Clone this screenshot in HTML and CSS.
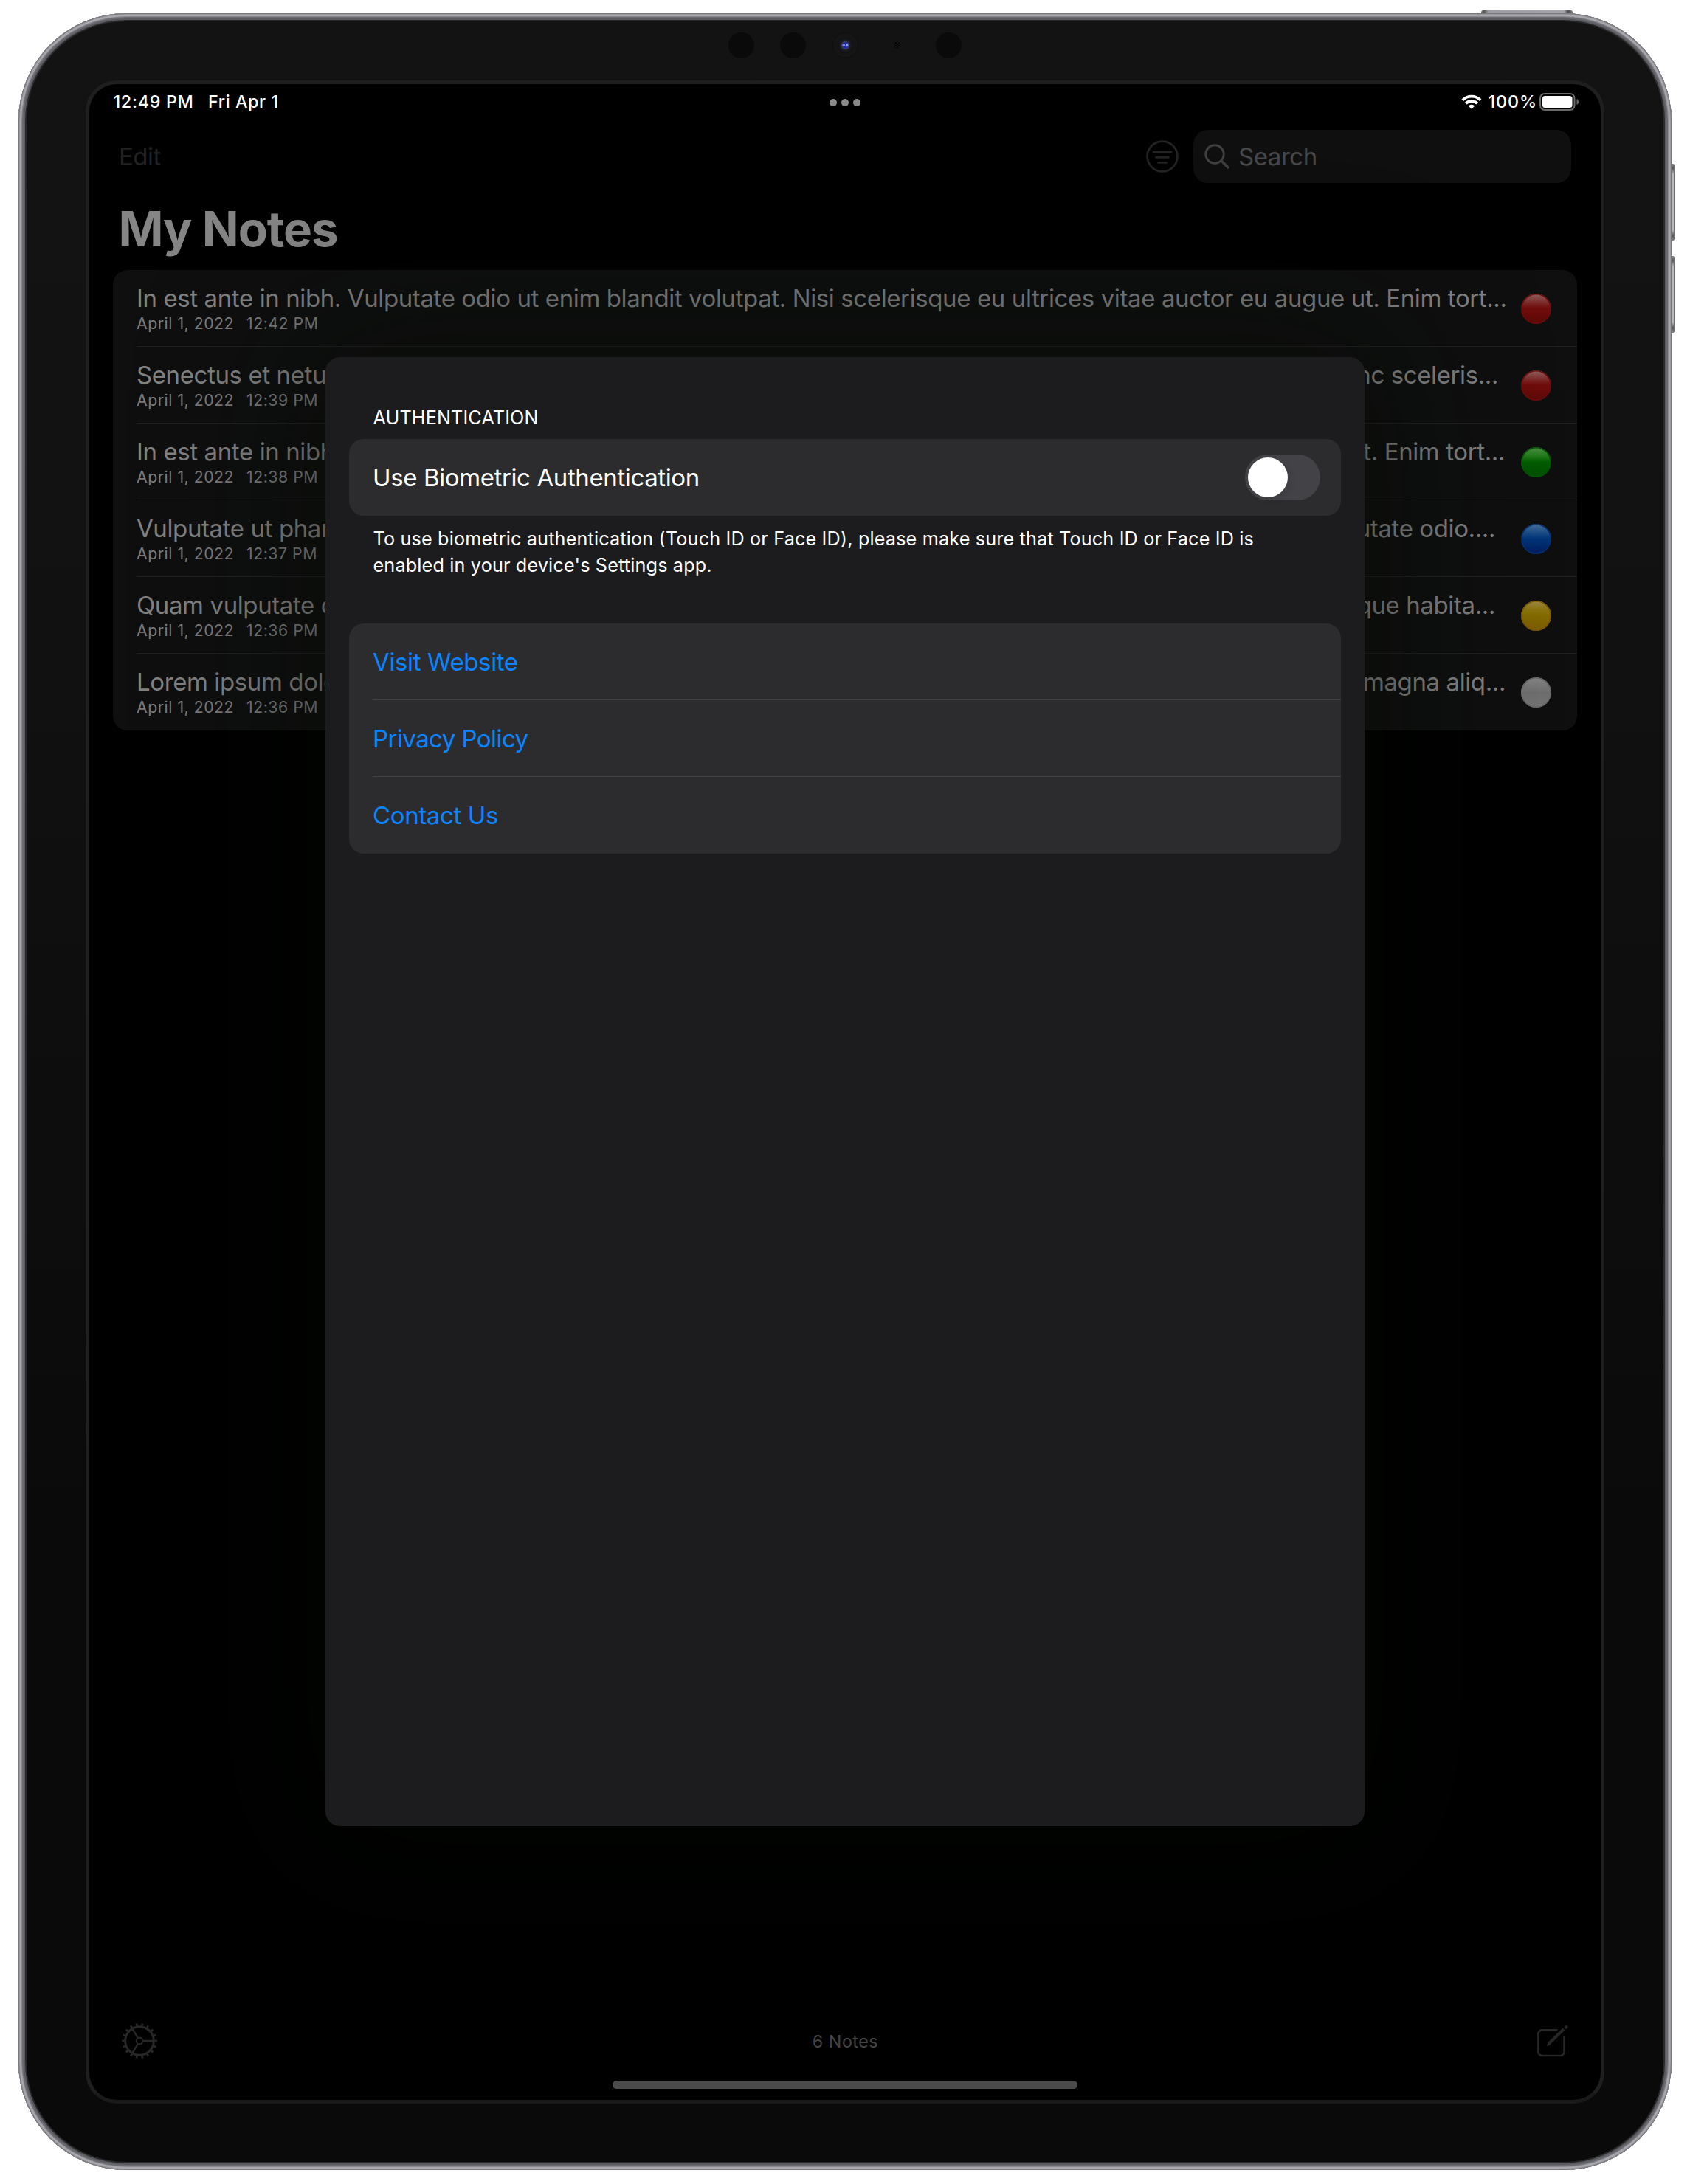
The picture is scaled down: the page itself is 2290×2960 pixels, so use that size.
FILE: index.html
```
<!DOCTYPE html>
<html lang="en">
<head>
<meta charset="utf-8">
<title>My Notes</title>
<link rel="stylesheet" href="styles.css">
</head>
<body>
<div class="device">
  <span class="hw hw-top"></span>
  <span class="hw hw-side hw-up"></span>
  <span class="hw hw-side hw-down"></span>
  <div class="bezel">
    <div class="sensors">
      <span class="sensor"></span>
      <span class="sensor"></span>
      <svg class="lens" viewBox="0 0 35 35">
        <defs>
          <radialGradient id="lens"><stop offset="0" stop-color="#4a5078"/><stop offset=".4" stop-color="#2a2c3a"/><stop offset=".7" stop-color="#16181f"/><stop offset="1" stop-color="#121212"/></radialGradient>
        </defs>
        <circle cx="17.5" cy="17.5" r="17" fill="#151515" stroke="#0f0f0f"/>
        <circle cx="17.5" cy="17.5" r="11" fill="url(#lens)"/>
        <circle cx="17.5" cy="17.5" r="4.8" fill="#1f27a8" stroke="#4a4a60"/>
        <circle cx="15.3" cy="17.4" r="1.8" fill="#8f8bff"/>
        <circle cx="19.700" cy="17.600" r="1.8" fill="#7fa8f8"/>
      </svg>
      <span class="mic"></span>
      <span class="sensor"></span>
    </div>
    <div class="screen">
      <header class="status">
        <span class="time">12:49 PM</span>
        <span class="date">Fri Apr 1</span>
        <span class="dots"><i></i><i></i><i></i></span>
        <svg class="wifi" viewBox="0 0 28 20">
          <path d="M1.9 7.6a17.1 17.1 0 0 1 24.2 0M6.3 12.2a10.9 10.9 0 0 1 15.4 0" fill="none" stroke="#fff" stroke-width="3.8"/>
          <path d="M14 19.8l-4.3-4.4a6.1 6.1 0 0 1 8.6 0z" fill="#fff"/>
        </svg>
        <span class="percent">100%</span>
        <svg class="battery" viewBox="0 0 54 24">
          <rect x="1" y="1" width="46.5" height="22" rx="6" fill="none" stroke="#6a6a6a" stroke-width="2"/>
          <rect x="4" y="4" width="40.5" height="16" rx="3.5" fill="#fff"/>
          <path d="M50.5 8c3.300 1.500 3.300 6.500 0 8z" fill="#6a6a6a"/>
        </svg>
      </header>

      <nav class="nav">
        <span class="edit">Edit</span>
        <svg class="filter" viewBox="0 0 46 46" fill="none" stroke="#232323" stroke-width="2.700" stroke-linecap="round">
          <circle cx="23" cy="23" r="20.400"/>
          <path d="M11 17h24M14.500 24.300h17M17.500 31.500h11"/>
        </svg>
        <div class="search">
          <svg class="glass" viewBox="0 0 34 34" fill="none" stroke="#404042" stroke-width="2.900" stroke-linecap="round">
            <circle cx="14" cy="14" r="12.200"/>
            <path d="M23 23l9 9" stroke-width="3.400"/>
          </svg>
          <span>Search</span>
        </div>
      </nav>

      <h1 class="title">My Notes</h1>

      <ul class="notes">
        <li class="note">
          <div class="text">
            <p class="line"><span>In est ante in nibh. Vulputate odio ut enim blandit volutpat. Nisi scelerisque eu ultrices vitae auctor eu augue ut. Enim tort...</span></p>
            <p class="stamp"><span>April 1, 2022</span><span>12:42 PM</span></p>
          </div>
          <i class="tag red"></i>
        </li>
        <li class="note">
          <div class="text">
            <p class="line"><span>Senectus et netus et</span><span class="tail t2">nunc sceleris...</span></p>
            <p class="stamp"><span>April 1, 2022</span><span>12:39 PM</span></p>
          </div>
          <i class="tag red"></i>
        </li>
        <li class="note">
          <div class="text">
            <p class="line"><span>In est ante in nibh.</span><span class="tail t3">ut. Enim tort...</span></p>
            <p class="stamp"><span>April 1, 2022</span><span>12:38 PM</span></p>
          </div>
          <i class="tag green"></i>
        </li>
        <li class="note">
          <div class="text">
            <p class="line"><span>Vulputate ut pharetra</span><span class="tail t4">vulputate odio....</span></p>
            <p class="stamp"><span>April 1, 2022</span><span>12:37 PM</span></p>
          </div>
          <i class="tag blue"></i>
        </li>
        <li class="note">
          <div class="text">
            <p class="line"><span>Quam vulputate dignissim</span><span class="tail t5">tristique habita...</span></p>
            <p class="stamp"><span>April 1, 2022</span><span>12:36 PM</span></p>
          </div>
          <i class="tag yellow"></i>
        </li>
        <li class="note">
          <div class="text">
            <p class="line"><span>Lorem ipsum dolor sit</span><span class="tail t6">magna aliq...</span></p>
            <p class="stamp"><span>April 1, 2022</span><span>12:36 PM</span></p>
          </div>
          <i class="tag white"></i>
        </li>
      </ul>

      <footer class="toolbar">
        <svg class="gear" viewBox="0 0 48 48" fill="none" stroke="#272727">
          <circle cx="24" cy="24" r="19.300" stroke-width="3"/>
          <circle cx="24" cy="24" r="22" stroke-width="3.600" pathLength="36" stroke-dasharray=".72 1.28" stroke-dashoffset=".36"/>
          <circle cx="24" cy="24" r="4.300" stroke-width="2.200"/>
          <path d="M28.500 24H43M21.800 20.100L14.300 7.300M21.800 27.900L14.300 40.700" stroke-width="2.300"/>
        </svg>
        <span class="count">6 Notes</span>
        <svg class="compose" viewBox="0 0 44 44" fill="none" stroke="#272727">
          <path d="M28.500 7.300H7.500a5 5 0 0 0-5 5V37a5 5 0 0 0 5 5H32.500a5 5 0 0 0 5-5V16" stroke-width="2.600"/>
          <path d="M17 25.500L37 6" stroke-width="4"/>
          <path d="M14.500 28.500l1.200-4.300 3 2.800z" fill="#272727"/>
          <path d="M39.800 3.900l.8-.8" stroke-width="4" stroke-linecap="round"/>
        </svg>
      </footer>
      <div class="home"></div>

      <section class="sheet">
        <h2 class="head">AUTHENTICATION</h2>
        <div class="group">
          <div class="cell"><span>Use Biometric Authentication</span><span class="switch"><i></i></span></div>
        </div>
        <p class="help">To use biometric authentication (Touch ID or Face ID), please make sure that Touch ID or Face ID is<br>enabled in your device's Settings app.</p>
        <div class="group">
          <a class="cell link">Visit Website</a>
          <a class="cell link privacy">Privacy Policy</a>
          <a class="cell link">Contact Us</a>
        </div>
      </section>
    </div>
  </div>
</div>
</body>
</html>
```
FILE: styles.css
```
* { box-sizing: border-box; margin: 0; padding: 0; }
body {
  padding: 18px 0 0 25px;
  background: #fff;
  font-family: Inter, "Liberation Sans", sans-serif;
}
svg, i { display: block; flex: none; }
ul { list-style: none; }

/* device frame */
.device {
  position: relative;
  width: 2240px;
  height: 2923px;
  border-radius: 146px;
}
.bezel {
  position: relative;
  height: 100%;
  padding: 91px 91px 90px;
  border-radius: 146px;
  background: linear-gradient(#131313, #111 30%, #0a0a0a 70%);
  box-shadow:
    inset 0 0 0 1px #77767b,
    inset 0 0 0 2px #9a9aa0,
    inset 0 0 0 4px #a8a8ae,
    inset 0 0 0 5px #8a8a90,
    inset 0 0 0 7px #6a6b70,
    inset 0 0 0 9px #5a5b60,
    inset 0 0 0 11px #29292b;
}
.hw {
  position: absolute;
  border-radius: 3px;
}
.hw-top {
  left: 1982px;
  top: -4px;
  width: 124px;
  height: 8px;
  background: linear-gradient(90deg, #77777c, #55555a 4px, #9c9ca2 10px, #a4a4aa 112px, #4a4a4e 118px, #77777c);
}
.hw-side {
  right: -4px;
  width: 8px;
  height: 104px;
  background: linear-gradient(#88888c, #55555a 6px, #b8b8bd 14px, #b8b8bd 90px, #55555a 97px, #88888c);
  box-shadow: inset -1px 0 0 #6c6c70;
}
.hw-up { top: 204px; }
.hw-down { top: 329px; }

.sensors {
  position: absolute;
  left: 962px;
  top: 26px;
  display: flex;
  align-items: center;
  gap: 35.300px;
}
.sensor, .lens { width: 35px; height: 35px; }
.sensor { border-radius: 50%; background: #0a0a0a; }
.mic {
  width: 9px;
  height: 9px;
  margin: 0 13px;
  border-radius: 50%;
  background: repeating-conic-gradient(#000 0 25%, #161616 0 50%) 0 0 / 4px 4px;
}

.screen {
  position: relative;
  display: flex;
  flex-direction: column;
  width: 2058px;
  height: 2742px;
  border: 5px solid #1f1f1f;
  border-bottom-color: #1a1a1a;
  border-radius: 42px;
  background: #000;
}

/* status bar */
.status {
  position: relative;
  display: flex;
  align-items: center;
  height: 48px;
  padding: 0 29px 0 32px;
  color: #fff;
  font-size: 23.300px;
  font-weight: 500;
  letter-spacing: .7px;
}
.time, .date, .percent { margin-top: -1px; }
.time { margin-left: .5px; }
.date { margin-left: 19.500px; letter-spacing: .6px; }
.dots {
  position: absolute;
  left: 1003px;
  top: 20px;
  display: flex;
  gap: 6px;
}
.dots i { width: 10px; height: 10px; border-radius: 50%; background: #8a8a8a; }
.wifi { width: 28px; height: 20px; margin-left: auto; }
.percent { margin-left: 9px; margin-right: 3px; letter-spacing: .9px; }
.battery { width: 54px; height: 24px; }

/* navigation */
.nav {
  display: flex;
  align-items: center;
  height: 100px;
  padding: 0 40px;
  font-size: 33px;
}
.edit { color: #222; letter-spacing: -.5px; }
.filter { width: 46px; height: 46px; margin-left: auto; }
.search {
  display: flex;
  align-items: center;
  gap: 12px;
  width: 512px;
  height: 72px;
  margin-left: 19px;
  padding-left: 15px;
  border-radius: 20px;
  background: #0f0f10;
  color: #474749;
  letter-spacing: -.45px;
}
.glass { width: 34px; height: 34px; }
.title {
  margin-bottom: 8px;
  padding: 2px 0 0 39.500px;
  color: #858585;
  font-size: 65.500px;
  font-weight: 700;
  line-height: 94px;
  letter-spacing: -1.100px;
}

/* notes */
.notes {
  margin: 0 32px;
  border-radius: 20px;
  background: #0f0f10;
}
.note {
  position: relative;
  display: flex;
  align-items: center;
  justify-content: space-between;
  height: 104px;
  padding: 0 35px 0 32px;
}
.note + .note::before, .cell + .cell::before {
  content: "";
  position: absolute;
  left: 32px;
  right: 0;
  top: -1px;
  height: 1px;
  background: #202021;
}
.text { width: 1856px; height: 72px; white-space: nowrap; }
.line {
  display: flex;
  justify-content: space-between;
  color: #828282;
  font-size: 33px;
  line-height: 44px;
  letter-spacing: -.396px;
}
.t2 { margin-right: 11px; }
.t3 { margin-right: 2px; }
.t4 { margin-right: 15px; }
.t5 { margin-right: 15px; }
.t6 { margin-right: 1px; }
.stamp {
  display: flex;
  gap: 17px;
  color: #7c7c7c;
  font-size: 21.300px;
  line-height: 24px;
  letter-spacing: .5px;
}
.tag {
  width: 41px;
  height: 41px;
  border-radius: 50%;
}
.red { background: linear-gradient(#8e6260, #7c2a28 30%, #700d0c 48%, #5c0907); box-shadow: inset 0 0 0 1.500px #6b0d0b; }
.green { background: linear-gradient(#4d8f45, #217a1a 30%, #005c00 50%, #004f00); box-shadow: inset 0 0 0 1.500px #035203; }
.blue { background: linear-gradient(#48709a, #1a4c86 30%, #00367a 48%, #001c5e); box-shadow: inset 0 0 0 1.500px #06316c; }
.yellow { background: linear-gradient(#9c8a44, #8c7410 30%, #846a00 50%, #7c5c00); box-shadow: inset 0 0 0 1.500px #7a5405; }
.white { background: linear-gradient(#848484, #777 30%, #6e6e6e 50%, #747474); box-shadow: inset 0 0 0 1.500px #666; }

/* toolbar */
.toolbar {
  display: grid;
  grid-template-columns: 1fr auto 1fr;
  align-items: center;
  height: 108px;
  margin-top: auto;
  padding: 0 43px 0 44px;
}
.gear { width: 48px; height: 48px; }
.count { color: #434343; font-size: 23.300px; letter-spacing: .5px; }
.compose { width: 44px; height: 44px; justify-self: end; }
.home {
  width: 630px;
  height: 11px;
  margin: 0 auto 15px;
  border-radius: 6px;
  background: #4b4b4b;
}

/* settings sheet */
.sheet {
  position: absolute;
  left: 320px;
  top: 370px;
  width: 1408px;
  height: 1991px;
  padding: 64px 32px 0;
  border-radius: 20px;
  background: #1c1c1e;
  box-shadow: 0 0 200px 50px rgba(5, 10, 0, .45);
  color: #fff;
}
.head {
  margin: 0 0 11px 32.500px;
  font-size: 25.200px;
  font-weight: 400;
  line-height: 36px;
  letter-spacing: .14px;
}
.group { border-radius: 20px; background: #2c2c2e; }
.cell {
  position: relative;
  display: flex;
  align-items: center;
  justify-content: space-between;
  height: 104px;
  padding: 0 28px 0 32px;
  font-size: 33px;
  letter-spacing: -.39px;
}
.cell + .cell::before { background: #424244; }
.link { color: #0a84ff; letter-spacing: -.38px; }
.privacy { letter-spacing: -.56px; }
.switch {
  width: 102px;
  height: 62px;
  padding: 4px;
  border-radius: 31px;
  background: #434347;
}
.switch i {
  width: 54px;
  height: 54px;
  border-radius: 50%;
  background: #fff;
  box-shadow: 4px 4px 10px rgba(0, 0, 0, .08);
}
.help {
  margin: 13px 0 61px 32.500px;
  font-size: 25.200px;
  line-height: 36px;
  letter-spacing: .165px;
  white-space: nowrap;
}
```
